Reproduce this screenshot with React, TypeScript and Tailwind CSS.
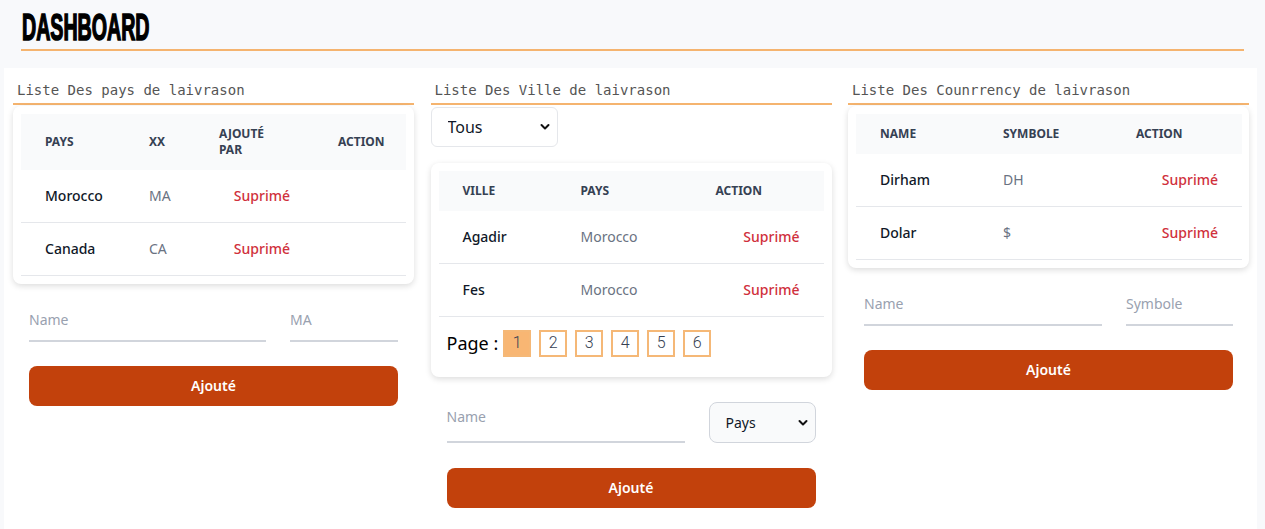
import React from "react";

// Shared look for the bits that repeat in each column.
const mono = "font-['DejaVu_Sans_Mono','Liberation_Mono',monospace]";
const sans = "font-['Noto_Sans','Open_Sans',sans-serif]";

type Col = { label: string; width: string };

const SectionTitle = ({ children }: { children: React.ReactNode }) => (
    <div className={`${mono} border-b-2 border-[#f5b46f] pb-[3px] pl-[4px] text-[14px] font-light leading-5 text-[#555]`}>
        {children}
    </div>
);

// Simple tailwind table, header row grey, rows split by a thin line.
const DataTable = ({ cols, rows }: { cols: Col[]; rows: string[][] }) => (
    <div className="rounded-lg bg-white p-2 shadow-[0_2px_6px_rgba(0,0,0,0.14)]">
        <table className={`${sans} w-full table-fixed text-left text-sm`}>
            <colgroup>
                {cols.map((c) => (
                    <col key={c.label} className={c.width} />
                ))}
            </colgroup>
            <thead className="bg-gray-50 text-xs font-bold uppercase leading-4 text-gray-700">
                <tr>
                    {cols.map((c) => (
                        <th key={c.label} className="px-6 py-3 font-bold">
                            {c.label}
                        </th>
                    ))}
                </tr>
            </thead>
            <tbody>
                {rows.map((r) => (
                    <tr key={r[0]} className="border-b border-gray-200">
                        <td className="px-6 py-4 font-medium text-gray-900">{r[0]}</td>
                        <td className="px-6 py-4 text-gray-500">{r[1]}</td>
                        <td className="px-6 py-4 text-right font-medium text-[#d0303c]">Suprimé</td>
                    </tr>
                ))}
            </tbody>
        </table>
    </div>
);

const Chevron = () => (
    <svg className="pointer-events-none absolute right-[8px] top-1/2 -translate-y-1/2" width="10" height="7" viewBox="0 0 10 7">
        <path d="M1.5 1.5 5 5l3.5-3.5" fill="none" stroke="#111" strokeWidth="2" strokeLinecap="round" strokeLinejoin="round" />
    </svg>
);

const LineInput = ({ placeholder, className }: { placeholder: string; className: string }) => (
    <input
        placeholder={placeholder}
        className={`${sans} ${className} border-b-2 border-gray-300 bg-transparent text-sm text-gray-700 outline-none placeholder:text-gray-400`}
    />
);

const AddButton = ({ className = "mt-6" }: { className?: string }) => (
    <button className={`${sans} ${className} h-10 w-full rounded-lg bg-[#c2410c] text-sm font-semibold text-white`}>
        Ajouté
    </button>
);

export default function App() {
    return (
        <div className="min-h-screen bg-[#f8f9fb]">
            {/* page title */}
            <header className="px-[21px] pt-[10px]">
                <div className="border-b-2 border-[#f5b46f] pb-[3px]">
                    <h1 className="ml-[1px] inline-block origin-left scale-x-[0.545] font-['Liberation_Sans',sans-serif] text-[36px] font-bold leading-none text-black [-webkit-text-stroke:1.6px_black]">
                        DASHBOARD
                    </h1>
                </div>
            </header>

            <main className="ml-[4px] mr-[8px] mt-[17px] grid min-h-[461px] grid-cols-[401px_401px_401px] gap-x-[16.5px] bg-white pl-[9px] pt-[12px]">
                {/* pays */}
                <section>
                    <SectionTitle>Liste Des pays de laivrason</SectionTitle>
                    <div className="mt-px">
                        <DataTable
                            cols={[
                                { label: "Pays", width: "w-[104px]" },
                                { label: "XX", width: "w-[70px]" },
                                { label: "Ajouté par", width: "w-[119px]" },
                                { label: "Action", width: "w-[92px]" },
                            ]}
                            rows={[
                                ["Morocco", "MA"],
                                ["Canada", "CA"],
                            ]}
                        />
                    </div>
                    <div className="mt-[18px] px-4">
                        <div className="flex gap-6">
                            <LineInput placeholder="Name" className="h-10 w-[238px] pb-[10px] pt-[6px]" />
                            <LineInput placeholder="MA" className="h-10 w-[108px] pb-[10px] pt-[6px]" />
                        </div>
                        <AddButton />
                    </div>
                </section>

                {/* villes */}
                <section>
                    <SectionTitle>Liste Des Ville de laivrason</SectionTitle>
                    <div className="relative mt-[2px] w-[127px]">
                        <select className={`${sans} h-10 w-full appearance-none rounded-md border border-gray-200 bg-white pl-4 text-base text-gray-900 outline-none`}>
                            <option>Tous</option>
                        </select>
                        <Chevron />
                    </div>
                    <div className="mt-[16px] rounded-lg bg-white p-2 pb-5 shadow-[0_2px_6px_rgba(0,0,0,0.14)]">
                        <table className={`${sans} w-full table-fixed text-left text-sm`}>
                            <colgroup>
                                <col className="w-[118px]" />
                                <col className="w-[135px]" />
                                <col className="w-[132px]" />
                            </colgroup>
                            <thead className="bg-gray-50 text-xs uppercase leading-4 text-gray-700">
                                <tr>
                                    <th className="px-6 py-3 font-bold">Ville</th>
                                    <th className="px-6 py-3 font-bold">Pays</th>
                                    <th className="px-6 py-3 font-bold">Action</th>
                                </tr>
                            </thead>
                            <tbody>
                                {["Agadir", "Fes"].map((v) => (
                                    <tr key={v} className="border-b border-gray-200">
                                        <td className="px-6 py-4 font-medium text-gray-900">{v}</td>
                                        <td className="px-6 py-4 text-gray-500">Morocco</td>
                                        <td className="px-6 py-4 text-right font-medium text-[#d0303c]">Suprimé</td>
                                    </tr>
                                ))}
                            </tbody>
                        </table>
                        <div className="mt-[12px] flex items-center pl-2">
                            <span className={`${sans} mr-[5px] text-lg text-black`}>Page :</span>
                            <div className="flex gap-2">
                                {[1, 2, 3, 4, 5, 6].map((n) => (
                                    <button
                                        key={n}
                                        className={`flex h-[27px] w-[28px] items-center justify-center border-2 border-[#f5b877] font-['Roboto',sans-serif] text-base font-light text-gray-700 ${n === 1 ? "bg-[#f8b673]" : "bg-white"}`}
                                    >
                                        {n}
                                    </button>
                                ))}
                            </div>
                        </div>
                    </div>
                    <div className="mt-[25px] px-4">
                        <div className="flex items-end gap-6">
                            <LineInput placeholder="Name" className="h-[41px] w-[238px] pb-[14px] pt-[3px]" />
                            <div className="relative w-[107px]">
                                <select className={`${sans} h-[41px] w-full appearance-none rounded-lg border border-gray-300 bg-gray-50 pl-4 text-sm text-gray-900 outline-none`}>
                                    <option>Pays</option>
                                </select>
                                <Chevron />
                            </div>
                        </div>
                        <AddButton className="mt-[25px]" />
                    </div>
                </section>

                {/* currency */}
                <section>
                    <SectionTitle>Liste Des Counrrency de laivrason</SectionTitle>
                    <div className="mt-px">
                        <DataTable
                            cols={[
                                { label: "Name", width: "w-[123px]" },
                                { label: "Symbole", width: "w-[133px]" },
                                { label: "Action", width: "w-[130px]" },
                            ]}
                            rows={[
                                ["Dirham", "DH"],
                                ["Dolar", "$"],
                            ]}
                        />
                    </div>
                    <div className="mt-[18px] px-4">
                        <div className="flex gap-6">
                            <LineInput placeholder="Name" className="h-10 w-[239px] pb-[10px] pt-[6px]" />
                            <LineInput placeholder="Symbole" className="h-10 w-[107px] pb-[10px] pt-[6px]" />
                        </div>
                        <AddButton />
                    </div>
                </section>
            </main>
        </div>
    );
}
